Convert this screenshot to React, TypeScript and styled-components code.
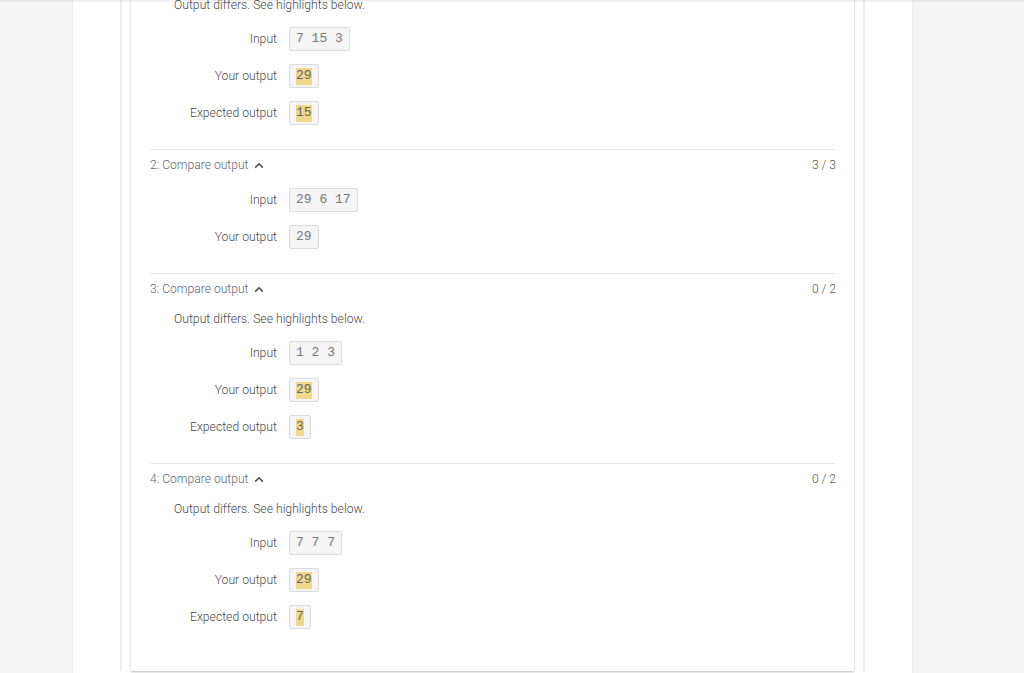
import React from "react"
import styled, { createGlobalStyle } from "styled-components"

const font = {
  text: '"Roboto", "Liberation Sans", sans-serif',
  code: '"Liberation Mono", "Courier New", monospace',
}

const colors = {
  page: "#f4f4f4",
  text: "#4a4a4a",
  header: "#5d6875",
  divider: "#e6e6e6",
  codeBg: "#f5f5f5",
  codeBorder: "#dcdcdc",
  code: "#777",
  highlight: "#f1d78a",
}

const GlobalStyle = createGlobalStyle`
  html, body {
    margin: 0;
    padding: 0;
    background: ${colors.page};
    font-family: ${font.text};
    overflow: hidden;
  }
`

const TopShade = styled.div`
  position: fixed;
  top: 0;
  left: 0;
  right: 0;
  height: 3px;
  background: linear-gradient(rgba(0, 0, 0, 0.07), rgba(0, 0, 0, 0));
  z-index: 5;
`

const Page = styled.div`
  display: flex;
  min-height: 673px;
`

const Column = styled.main`
  margin-left: 72px;
  width: 841px;
  background: #fff;
  border-left: 1px solid #ececec;
  border-right: 1px solid #ececec;
  box-sizing: border-box;
  padding: 0 47px;
`

const Frame = styled.div`
  min-height: 673px;
  border-left: 2px solid #ededed;
  border-right: 2px solid #ededed;
  padding: 0 9px;
`

const Card = styled.section`
  margin-top: -41px;
  background: #fff;
  box-shadow: 0 1px 2px rgba(0, 0, 0, 0.28);
  padding: 0 19px 18px;
`

const Section = styled.div`
  border-top: 1px solid ${colors.divider};
  padding: 5px 0 24px;
  &:first-child {
    border-top: none;
    padding-top: 6px;
  }
`

const Header = styled.div`
  display: flex;
  align-items: center;
  justify-content: space-between;
  height: 20px;
  font-size: 12.1px;
  font-weight: 300;
`

const Title = styled.div`
  display: flex;
  align-items: center;
  gap: 6px;
  color: ${colors.header};
`

const Score = styled.span`
  color: #555;
  margin-right: -1px;
`

const Message = styled.div`
  margin-top: 12px;
  padding-left: 24px;
  height: 17px;
  line-height: 17px;
  font-size: 12.2px;
  font-weight: 300;
  color: ${colors.text};
`

const Row = styled.div`
  display: flex;
  align-items: center;
  margin-top: 13px;
  padding-left: 24px;
  height: 24px;
`

const Label = styled.span`
  width: 103px;
  text-align: right;
  font-size: 12.2px;
  font-weight: 300;
  color: ${colors.text};
`

const Code = styled.span`
  margin-left: 12px;
  box-sizing: border-box;
  height: 24px;
  padding: 3px 6px;
  border: 1px solid ${colors.codeBorder};
  border-radius: 2px;
  background: ${colors.codeBg};
  font-family: ${font.code};
  font-size: 13px;
  line-height: 16px;
  color: ${colors.code};
  white-space: pre;
`

const Mark = styled.span`
  background: ${colors.highlight};
  display: inline-block;
  height: 17px;
  color: #666;
`

type Result = {
  index: number
  score: string
  input: string
  yours: string
  expected?: string
}

const results: Result[] = [
  { index: 1, score: "0 / 3", input: "7 15 3", yours: "29", expected: "15" },
  { index: 2, score: "3 / 3", input: "29 6 17", yours: "29" },
  { index: 3, score: "0 / 2", input: "1 2 3", yours: "29", expected: "3" },
  { index: 4, score: "0 / 2", input: "7 7 7", yours: "29", expected: "7" },
]

function ChevronUp() {
  return (
    <svg width="10" height="7" viewBox="0 0 10 7" fill="none">
      <path d="M1.2 5.6 L5 1.8 L8.8 5.6" stroke="#4a4a4a" strokeWidth="1.5" />
    </svg>
  )
}

function TestBlock({ r }: { r: Result }) {
  const differs = r.expected !== undefined
  return (
    <Section>
      <Header>
        <Title>
          {r.index}: Compare output
          <ChevronUp />
        </Title>
        <Score>{r.score}</Score>
      </Header>
      {differs && <Message>Output differs. See highlights below.</Message>}
      <Row>
        <Label>Input</Label>
        <Code>{r.input}</Code>
      </Row>
      <Row>
        <Label>Your output</Label>
        <Code>{differs ? <Mark>{r.yours}</Mark> : r.yours}</Code>
      </Row>
      {differs && (
        <Row>
          <Label>Expected output</Label>
          <Code>
            <Mark>{r.expected}</Mark>
          </Code>
        </Row>
      )}
    </Section>
  )
}

export default function App() {
  return (
    <>
      <GlobalStyle />
      <TopShade />
      <Page>
        <Column>
          <Frame>
            <Card>
              {results.map((r) => (
                <TestBlock key={r.index} r={r} />
              ))}
            </Card>
          </Frame>
        </Column>
      </Page>
    </>
  )
}
